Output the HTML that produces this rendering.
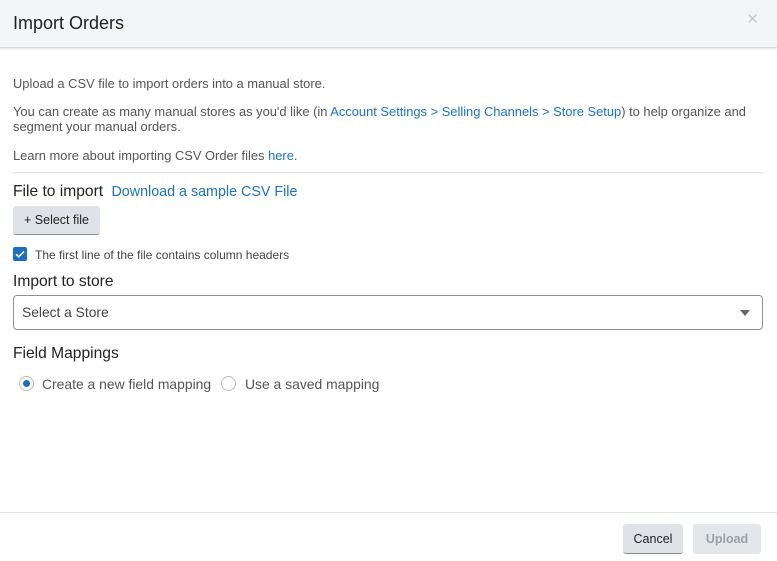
<!DOCTYPE html>
<html><head><style>
*{box-sizing:border-box;margin:0;padding:0}
body{width:777px;height:561px;background:#fff;font-family:"Liberation Sans",Arial,sans-serif;color:#333;position:relative;overflow:hidden}
.hdr{position:absolute;left:0;top:0;width:777px;height:48px;background:#f4f5f6;border-bottom:1px solid #d6d8da;box-shadow:0 1px 2px rgba(0,0,0,.12)}
.hdr h1{position:absolute;left:13px;top:13px;font-size:18px;font-weight:normal;color:#222}
.x{position:absolute;right:18px;top:10px;font-size:15px;color:#c6c8ca}
.t{position:absolute;left:13px;font-size:12.9px;color:#555;line-height:15px}
a{color:#1a73c8;text-decoration:none}
.hr{position:absolute;left:13px;top:172px;width:750px;height:1px;background:#dcdfe2}
.h{position:absolute;left:13px;font-size:15.6px;color:#222}
.btn{position:absolute;background:#dfe2e6;border-radius:3px;font-size:12.5px;color:#222;text-align:center;border-bottom:1px solid #8a9098}
.cb{position:absolute;left:13px;top:247px;width:14px;height:14px;background:#1a6fc2;border-radius:2px}
.sel{position:absolute;left:13px;top:295px;width:750px;height:35px;border:1px solid #8b929a;border-radius:4px;font-size:13.8px;color:#444;padding:9px 8px}
.tri{position:absolute;right:12px;top:14px;width:0;height:0;border-left:5px solid transparent;border-right:5px solid transparent;border-top:6px solid #666}
.r{position:absolute;top:376px;width:15px;height:15px;border:1px solid #b8bcc0;border-radius:50%}
.foot{position:absolute;left:0;top:512px;width:777px;height:1px;background:#dde1e4}
</style></head><body>
<div class="hdr"><h1>Import Orders</h1><div class="x">✕</div></div>
<div class="t" style="top:76px">Upload a CSV file to import orders into a manual store.</div>
<div class="t" style="top:104px;width:764px">You can create as many manual stores as you'd like (in <a>Account Settings &gt; Selling Channels &gt; Store Setup</a>) to help organize and segment your manual orders.</div>
<div class="t" style="top:148px">Learn more about importing CSV Order files <a>here</a>.</div>
<div class="hr"></div>
<div class="h" style="top:183px">File to import <a style="font-size:14.3px;margin-left:4px">Download a sample CSV File</a></div>
<div class="btn" style="left:13px;top:206px;width:87px;height:29px;line-height:28px">+ Select file</div>
<div class="cb"><svg width="14" height="14" viewBox="0 0 14 14"><path d="M3 7.2l2.7 2.6L11 4.5" stroke="#fff" stroke-width="1.6" fill="none"/></svg></div>
<div class="t" style="left:35px;top:248px;font-size:12px;color:#444">The first line of the file contains column headers</div>
<div class="h" style="top:273px">Import to store</div>
<div class="sel">Select a Store<div class="tri"></div></div>
<div class="h" style="top:345px">Field Mappings</div>
<div class="r" style="left:19px"><div style="position:absolute;left:3px;top:3px;width:7px;height:7px;border-radius:50%;background:#1a6fc2"></div></div>
<div class="t" style="left:42px;top:377px;font-size:13.9px">Create a new field mapping</div>
<div class="r" style="left:221px"></div>
<div class="t" style="left:245px;top:377px;font-size:13.9px">Use a saved mapping</div>
<div class="foot"></div>
<div class="btn" style="left:623px;top:524px;width:60px;height:30px;line-height:30px">Cancel</div>
<div class="btn" style="left:693px;top:524px;width:68px;height:30px;line-height:30px;background:#e4e7ea;color:#9aa0a6;border-bottom:none;font-weight:bold">Upload</div>
</body></html>
